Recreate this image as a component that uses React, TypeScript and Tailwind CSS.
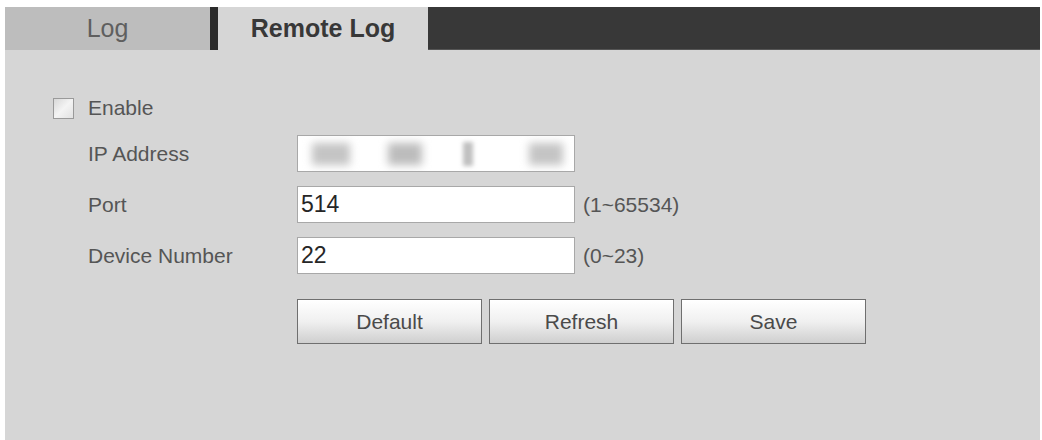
import React from "react";

function Field({ label, children, hint }: { label: string; children: React.ReactNode; hint?: string }) {
  return (
    <div className="flex items-center h-[37px]">
      <div className="w-[209px] text-[21px] text-[#555555]">{label}</div>
      {children}
      {hint && <div className="ml-[8px] text-[21px] text-[#555555]">{hint}</div>}
    </div>
  );
}

function Btn({ children }: { children: React.ReactNode }) {
  return (
    <button className="w-[185px] h-[45px] border border-[#6f6f6f] bg-gradient-to-b from-[#ffffff] via-[#f0f0f0] to-[#cfcfcf] text-[21px] text-[#4a4a4a] shadow-[inset_0_1px_0_#ffffff]">
      {children}
    </button>
  );
}

export default function App() {
  return (
    <div
      className="w-[1042px] h-[440px] bg-white pt-[7px] pl-[5px] pr-[2px] overflow-hidden"
      style={{ fontFamily: '"Liberation Sans", Arial, sans-serif' }}
    >
      <div className="h-full bg-[#d6d6d6] flex flex-col">
        <div className="flex h-[43px]">
          <div className="w-[205px] bg-[#bdbdbd] flex items-center justify-center text-[25px] text-[#5f5f5f]">Log</div>
          <div className="w-[8px] bg-[#2b2b2b]" />
          <div className="w-[210px] bg-[#d6d6d6] flex items-center justify-center text-[25px] font-bold text-[#383838]">Remote Log</div>
          <div className="flex-1 bg-[#383838] border-b border-[#555555]" />
        </div>
        <div className="pl-[48px] flex flex-col">
          <div className="mt-[47px] h-[22px] flex items-center">
            <div className="w-[21px] h-[21px] border border-[#9a9a9a] bg-gradient-to-br from-[#d8d8d8] via-[#f4f4f4] to-[#e2e2e2]" />
            <span className="ml-[14px] text-[21px] text-[#555555]">Enable</span>
          </div>
          <div className="pl-[35px] flex flex-col gap-[14px] mt-[16px]">
            <Field label="IP Address">
              <div className="w-[278px] h-[37px] bg-white border border-[#a8a8a8] relative overflow-hidden">
                <div className="absolute left-[14px] top-[7px] w-[38px] h-[22px] bg-[#c4c4c4] blur-[4px]" />
                <div className="absolute left-[90px] top-[7px] w-[34px] h-[22px] bg-[#bcbcbc] blur-[4px]" />
                <div className="absolute left-[165px] top-[6px] w-[10px] h-[24px] bg-[#c0c0c0] blur-[2px]" />
                <div className="absolute left-[231px] top-[7px] w-[34px] h-[22px] bg-[#c4c4c4] blur-[4px]" />
              </div>
            </Field>
            <Field label="Port" hint="(1~65534)">
              <div className="w-[278px] h-[37px] bg-white border border-[#a8a8a8] flex items-center pl-[3px] text-[23px] text-[#262626]">514</div>
            </Field>
            <Field label="Device Number" hint="(0~23)">
              <div className="w-[278px] h-[37px] bg-white border border-[#a8a8a8] flex items-center pl-[3px] text-[23px] text-[#262626]">22</div>
            </Field>
          </div>
          <div className="pl-[244px] mt-[25px] flex gap-[7px]">
            <Btn>Default</Btn>
            <Btn>Refresh</Btn>
            <Btn>Save</Btn>
          </div>
        </div>
      </div>
    </div>
  );
}
